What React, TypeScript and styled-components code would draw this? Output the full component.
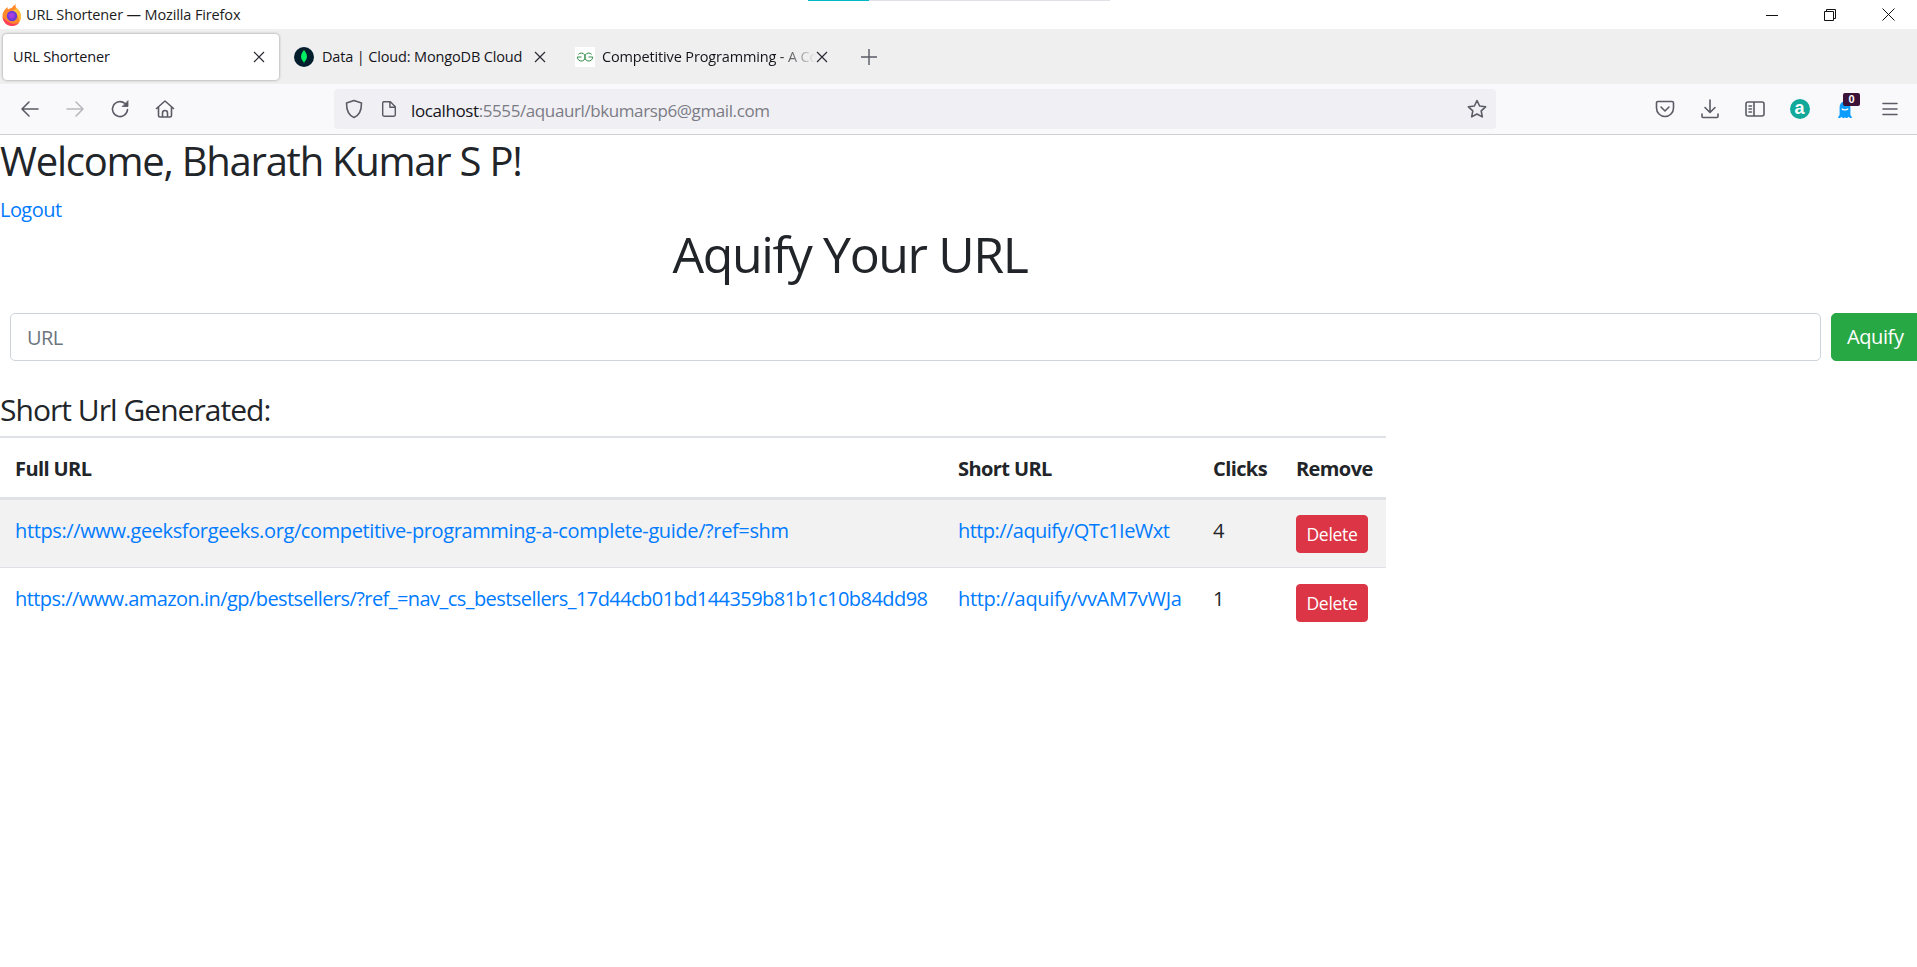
import React, { ReactNode } from 'react'
import styled, { createGlobalStyle } from 'styled-components'

const GlobalStyle = createGlobalStyle`
	html, body {
		margin: 0;
		padding: 0;
		background: #fff;
		overflow: hidden;
	}
	body {
		font-family: 'Open Sans', 'Noto Sans', Arial, sans-serif;
		color: #212529;
	}
	* {
		box-sizing: border-box;
	}
`

const Root = styled.div`
	width: 1917px;
	height: 967px;
	overflow: hidden;
	position: relative;
`

/* browser chrome */
const TitleBar = styled.div`
	height: 29px;
	background: #fff;
	display: flex;
	align-items: center;
	padding-left: 2px;
	font-size: 14.5px;
	letter-spacing: -0.13px;
	color: #1c1c1c;
	position: relative;
`

const TitleText = styled.span`
	margin-left: 4px;
`

const LoadBar = styled.div`
	position: absolute;
	top: 0;
	left: 808px;
	width: 302px;
	height: 1px;
	background: linear-gradient(to right, #00b8c4 61px, #e0e0e6 61px);
`

const WindowButtons = styled.div`
	margin-left: auto;
	display: flex;
	align-items: center;
`

const WindowButton = styled.div`
	width: 58px;
	height: 29px;
	display: flex;
	align-items: center;
	justify-content: center;
`

const TabStrip = styled.div`
	height: 55px;
	background: #efeff0;
	display: flex;
	align-items: center;
	padding-left: 3px;
`

const Tab = styled.div<{ $w: number; $active?: boolean }>`
	width: ${(p) => p.$w}px;
	height: 46px;
	display: flex;
	align-items: center;
	padding: 0 14px 0 ${(p) => (p.$active ? 10 : 15)}px;
	font-size: 14.5px;
	letter-spacing: -0.15px;
	color: #15141a;
	border-radius: 4px;
	background: ${(p) => (p.$active ? '#fff' : 'transparent')};
	box-shadow: ${(p) => (p.$active ? '0 0 3px rgba(0,0,0,0.4)' : 'none')};
`

const TabLabel = styled.span<{ $fade?: boolean }>`
	flex: 1;
	min-width: 0;
	white-space: nowrap;
	overflow: hidden;
	margin-left: 8px;
	${(p) => p.$fade && 'margin-left: 7px; mask-image: linear-gradient(to right, #000 82%, transparent 100%);'}
	&:first-child {
		margin-left: 0;
	}
`

const TabClose = styled.svg`
	flex: none;
	width: 12px;
	height: 12px;
	stroke: #2b2a33;
	stroke-width: 1.2;
	fill: none;
`

const NewTab = styled.svg`
	flex: none;
	width: 16px;
	height: 16px;
	margin-left: 19px;
	stroke: #5b5b66;
	stroke-width: 1.4;
	fill: none;
`

const NavBar = styled.div`
	height: 51px;
	background: #f9f9fb;
	border-bottom: 1px solid #cfcfd8;
	display: flex;
	align-items: center;
	padding: 0 5px 0 7px;
`

const NavGroup = styled.div`
	display: flex;
	align-items: center;
`

const NavButton = styled.div`
	flex: none;
	width: 45px;
	height: 40px;
	display: flex;
	align-items: center;
	justify-content: center;
	position: relative;
	svg {
		display: block;
	}
`

const UrlBar = styled.div`
	margin-left: 147px;
	width: 1162px;
	height: 40px;
	background: #f0f0f4;
	border-radius: 4px;
	display: flex;
	align-items: center;
	padding-left: 10px;
	padding-right: 9px;
	font-size: 17px;
	letter-spacing: -0.4px;
	color: #15141a;
`

const UrlText = styled.span`
	margin-left: 13px;
	flex: 1;
	padding-top: 2px;
	span {
		color: #7b7b85;
	}
`

const UrlIcon = styled.div`
	margin-left: 16px;
	display: flex;
	&:first-child {
		margin-left: 0;
	}
`

const RightGroup = styled(NavGroup)`
	margin-left: auto;
`

const ExtBadge = styled.span`
	position: absolute;
	top: 4px;
	left: 21px;
	width: 17px;
	height: 13px;
	border-radius: 2px;
	background: #3b1338;
	color: #fff;
	font-family: 'Liberation Sans', sans-serif;
	font-size: 11px;
	font-weight: 700;
	line-height: 13px;
	text-align: center;
`

const AmazonDot = styled.div`
	width: 20px;
	height: 20px;
	border-radius: 50%;
	background: #12a99a;
	color: #fff;
	font-family: 'Liberation Sans', sans-serif;
	font-size: 18px;
	font-weight: 700;
	line-height: 18px;
	text-align: center;
`

/* page */
const Page = styled.main`
	font-size: 20px;
	line-height: 30px;
`

const Welcome = styled.h2`
	margin: 0 0 10px;
	padding-top: 2px;
	font-size: 40px;
	font-weight: 400;
	line-height: 48px;
	letter-spacing: -1.25px;
`

const TextLink = styled.a<{ $spacing?: number }>`
	color: #007bff;
	text-decoration: none;
	letter-spacing: ${(p) => p.$spacing ?? -0.4}px;
`

const LogoutRow = styled.div`
	height: 30px;
`

const MainTitle = styled.h1`
	margin: 0;
	width: 1700px;
	text-align: center;
	font-size: 50px;
	font-weight: 400;
	line-height: 58px;
	letter-spacing: -1.4px;
`

const UrlForm = styled.form`
	display: flex;
	margin-top: 30px;
	padding-left: 10px;
	width: 1925px;
	gap: 10px;
`

const UrlInput = styled.input`
	flex: none;
	width: 1811px;
	height: 48px;
	padding: 0 16px;
	border: 1px solid #ced4da;
	border-radius: 5px;
	font: inherit;
	letter-spacing: -0.6px;
	color: #495057;
	background: #fff;
	&::placeholder {
		color: #6c757d;
		opacity: 1;
	}
`

const SubmitButton = styled.button`
	flex: none;
	width: 90px;
	height: 48px;
	border: 1px solid #28a745;
	border-radius: 5px;
	background: #28a745;
	color: #fff;
	font: inherit;
	letter-spacing: -0.4px;
	text-align: left;
	padding: 0 0 0 15px;
`

const SubTitle = styled.h4`
	margin: 31px 0 8px;
	font-size: 30px;
	font-weight: 400;
	line-height: 36px;
	letter-spacing: -0.97px;
`

const UrlTable = styled.table`
	width: 1386px;
	table-layout: fixed;
	border-collapse: collapse;
	border-top: 2px solid #dee2e6;
`

const HeadCell = styled.th<{ $w: number }>`
	width: ${(p) => p.$w}px;
	height: 61px;
	padding: 3px 15px 0;
	text-align: left;
	font-weight: 700;
	letter-spacing: -0.6px;
	border-bottom: 3px solid #dee2e6;
	white-space: nowrap;
`

const Row = styled.tr<{ $striped?: boolean }>`
	background: ${(p) => (p.$striped ? '#f2f2f2' : '#fff')};
	border-bottom: ${(p) => (p.$striped ? '1px solid #dee2e6' : 'none')};
`

const Cell = styled.td`
	height: 69px;
	padding: 0 15px 5px;
	white-space: nowrap;
	overflow: visible;
`

const ActionCell = styled(Cell)`
	padding-top: 2px;
	padding-bottom: 0;
`

const DeleteButton = styled.button`
	display: block;
	width: 72px;
	height: 38px;
	padding: 0;
	border: 1px solid #dc3545;
	border-radius: 4px;
	background: #dc3545;
	color: #fff;
	font-family: inherit;
	font-size: 17.5px;
	letter-spacing: -0.3px;
`

/* icons */
const stroke = { fill: 'none', stroke: '#5b5b66', strokeWidth: 1.6, strokeLinecap: 'round', strokeLinejoin: 'round' } as const

const Ico = ({ size = 20, color, children }: { size?: number; color?: string; children: ReactNode }) => (
	<svg width={size} height={size} viewBox="0 0 20 20" {...stroke} stroke={color || stroke.stroke}>
		{children}
	</svg>
)

const CloseX = () => (
	<TabClose viewBox="0 0 12 12">
		<path d="M1 1l10 10M11 1L1 11" />
	</TabClose>
)

const FirefoxLogo = () => (
	<svg width="20" height="22" viewBox="0 0 20 22">
		<path d="M1 9c1-3 3-5 5-6-.5 1-.5 2 0 2.500 1-1 3-1.500 4-1.500 0-1 2-3 4-4-1 2-.5 3 .5 4 2.500 2 4.500 5 4.500 8.500C19 18 15 22 10 22S1 18 .5 13c0-1.500 0-3 .5-4z" fill="#ff8a2b" />
		<path d="M14.500 4c2.500 2 4.500 5 4.500 8.500 0 2-.7 3.800-1.800 5.300C17 12 14 8 10 7c1-1 3-1 4.500-3z" fill="#ffc13b" />
		<circle cx="10" cy="12" r="5.200" fill="#6f3bd8" />
		<path d="M6.500 10.500c1-1.500 3-2 4.500-1.500 1.500.7 2 2.500 1.300 4-1 1.500-3 1.800-4.300 1-1-.8-1.800-2.200-1.500-3.500z" fill="#a63de0" />
		<path d="M.6 13c.4 5 4.400 9 9.400 9 3 0 5.500-1.300 7.200-3.500-3.200 1.800-7.200 1.700-10-.3C4.500 16.500 2 15 .6 13z" fill="#ff3e5e" />
	</svg>
)

const MongoLogo = () => (
	<svg width="20" height="20" viewBox="0 0 20 20" style={{ flex: 'none' }}>
		<circle cx="10" cy="10" r="10" fill="#001e2b" />
		<path d="M10 3c2 2.500 3 4.500 3 6.500 0 2.500-1.500 4.500-2.700 5.500L10 17l-.3-2C8.500 14 7 12 7 9.500 7 7.500 8 5.500 10 3z" fill="#00ed64" />
	</svg>
)

const GfgLogo = () => (
	<svg width="20" height="20" viewBox="0 0 20 20" style={{ flex: 'none' }}>
		<rect width="20" height="20" fill="#fff" />
		<path d="M3.300 7.400A4 4 0 1 1 2.300 10H6.500M16.700 7.400A4 4 0 1 0 17.700 10H13.500" fill="none" stroke="#2f8d46" strokeWidth="1" />
	</svg>
)

const Ghost = () => (
	<svg width="18" height="21" viewBox="0 0 20 22">
		<path d="M10 2c4 0 6 3 6 7v8l2 3c-2 1-3 0-4-1-1 1-2 2-4 1-2 1-3 0-4-1-1 1-2 2-4 1l2-3V9c0-4 2-7 6-7z" fill="#0a9dff" />
		<path d="M6.500 10c1 2 5.500 2 7 0" fill="none" stroke="#fff" strokeWidth="1.400" />
	</svg>
)

interface UrlRow {
	full: string
	fullSpacing: number
	short: string
	shortSpacing: number
	clicks: number
}

const urlRows: UrlRow[] = [
	{
		full: 'https://www.geeksforgeeks.org/competitive-programming-a-complete-guide/?ref=shm',
		fullSpacing: -0.38,
		short: 'http://aquify/QTc1IeWxt',
		shortSpacing: -0.55,
		clicks: 4
	},
	{
		full: 'https://www.amazon.in/gp/bestsellers/?ref_=nav_cs_bestsellers_17d44cb01bd144359b81b1c10b84dd98',
		fullSpacing: -0.56,
		short: 'http://aquify/vvAM7vWJa',
		shortSpacing: -0.3,
		clicks: 1
	}
]

const App = () => {
	return (
		<Root>
			<GlobalStyle />
			<TitleBar>
				<FirefoxLogo />
				<TitleText>URL Shortener — Mozilla Firefox</TitleText>
				<LoadBar />
				<WindowButtons>
					<WindowButton>
						<svg width="12" height="12" viewBox="0 0 12 12" fill="none" stroke="#111">
							<path d="M0 6.500h12" />
						</svg>
					</WindowButton>
					<WindowButton>
						<svg width="12" height="12" viewBox="0 0 12 12" fill="none" stroke="#111">
							<path d="M.5 2.500h9v9h-9zM2.500 2.500v-2h9v9h-2" />
						</svg>
					</WindowButton>
					<WindowButton>
						<svg width="13" height="13" viewBox="0 0 13 13" fill="none" stroke="#111">
							<path d="M.5.500l12 12M12.500.500l-12 12" />
						</svg>
					</WindowButton>
				</WindowButtons>
			</TitleBar>

			<TabStrip>
				<Tab $w={276} $active>
					<TabLabel>URL Shortener</TabLabel>
					<CloseX />
				</Tab>
				<Tab $w={281}>
					<MongoLogo />
					<TabLabel>Data | Cloud: MongoDB Cloud</TabLabel>
					<CloseX />
				</Tab>
				<Tab $w={282}>
					<GfgLogo />
					<TabLabel $fade>Competitive Programming - A Complete Guide</TabLabel>
					<CloseX />
				</Tab>
				<NewTab viewBox="0 0 16 16">
					<path d="M8 0v16M0 8h16" />
				</NewTab>
			</TabStrip>

			<NavBar>
				<NavGroup>
					<NavButton>
						<Ico>
							<path d="M18 10H2M9 3l-7 7 7 7" />
						</Ico>
					</NavButton>
					<NavButton>
						<Ico color="#b8b8bf">
							<path d="M2 10h16M11 3l7 7-7 7" />
						</Ico>
					</NavButton>
					<NavButton>
						<Ico>
							<path d="M17.500 10.500a7.500 7.500 0 1 1-2.500-6L16.500 6" />
							<path d="M18 2v5.500h-5.500z" fill="#5b5b66" strokeWidth="0.8" />
						</Ico>
					</NavButton>
					<NavButton>
						<Ico>
							<path d="M1.500 9.500L10 2l8.500 7.500M3.500 8v8.500a1.500 1.500 0 0 0 1.500 1.500h10a1.500 1.500 0 0 0 1.500-1.500V8M7.500 18v-4a2.500 2.500 0 0 1 5 0v4" />
						</Ico>
					</NavButton>
				</NavGroup>
				<UrlBar>
					<UrlIcon>
						<Ico>
							<path d="M10 1.500l7.500 2.500c0 8-2 12.500-7.500 14.500C4.500 16.500 2.500 12 2.500 4z" />
						</Ico>
					</UrlIcon>
					<UrlIcon>
						<Ico size={18}>
							<path d="M4 2h7.500L17 7.500V16.500a1.500 1.500 0 0 1-1.500 1.500h-11A1.500 1.500 0 0 1 3 16.500v-13A1.500 1.500 0 0 1 4 2zM11 2v6h6" />
						</Ico>
					</UrlIcon>
					<UrlText>
						localhost<span>:5555/aquaurl/bkumarsp6@gmail.com</span>
					</UrlText>
					<Ico>
						<path d="M10 1.500l2.600 5.500 6 .8-4.400 4.100 1.100 6L10 15l-5.300 2.900 1.100-6L1.400 7.800l6-.8z" />
					</Ico>
				</UrlBar>
				<RightGroup>
					<NavButton>
						<Ico>
							<path d="M3 2.500h14a1.500 1.500 0 0 1 1.500 1.500v5a8.500 8.500 0 0 1-17 0V4A1.500 1.500 0 0 1 3 2.500zM6 8l4 4 4-4" />
						</Ico>
					</NavButton>
					<NavButton>
						<Ico>
							<path d="M10 1v12M5 8.500l5 5 5-5M2 15v2.500a1 1 0 0 0 1 1h14a1 1 0 0 0 1-1V15" />
						</Ico>
					</NavButton>
					<NavButton>
						<Ico>
							<path d="M3 3h14a2 2 0 0 1 2 2v10a2 2 0 0 1-2 2H3a2 2 0 0 1-2-2V5a2 2 0 0 1 2-2zM9 3v14M4 7h2.500M4 10h2.500M4 13h2.500" />
						</Ico>
					</NavButton>
					<NavButton>
						<AmazonDot>a</AmazonDot>
					</NavButton>
					<NavButton>
						<Ghost />
						<ExtBadge>0</ExtBadge>
					</NavButton>
					<NavButton>
						<Ico>
							<path d="M3 4.500h14M3 10h14M3 15.500h14" />
						</Ico>
					</NavButton>
				</RightGroup>
			</NavBar>

			<Page>
				<Welcome>Welcome, Bharath Kumar S P!</Welcome>
				<LogoutRow>
					<TextLink href="#" $spacing={-0.55}>
						Logout
					</TextLink>
				</LogoutRow>
				<MainTitle>Aquify Your URL</MainTitle>
				<UrlForm>
					<UrlInput placeholder="URL" />
					<SubmitButton type="button">Aquify</SubmitButton>
				</UrlForm>
				<SubTitle>Short Url Generated:</SubTitle>
				<UrlTable>
					<thead>
						<tr>
							<HeadCell $w={943}>Full URL</HeadCell>
							<HeadCell $w={255}>Short URL</HeadCell>
							<HeadCell $w={83}>Clicks</HeadCell>
							<HeadCell $w={105}>Remove</HeadCell>
						</tr>
					</thead>
					<tbody>
						{urlRows.map((row, i) => (
							<Row key={row.short} $striped={i === 0}>
								<Cell>
									<TextLink href="#" $spacing={row.fullSpacing}>
										{row.full}
									</TextLink>
								</Cell>
								<Cell>
									<TextLink href="#" $spacing={row.shortSpacing}>
										{row.short}
									</TextLink>
								</Cell>
								<Cell>{row.clicks}</Cell>
								<ActionCell>
									<DeleteButton type="button">Delete</DeleteButton>
								</ActionCell>
							</Row>
						))}
					</tbody>
				</UrlTable>
			</Page>
		</Root>
	)
}

export default App
